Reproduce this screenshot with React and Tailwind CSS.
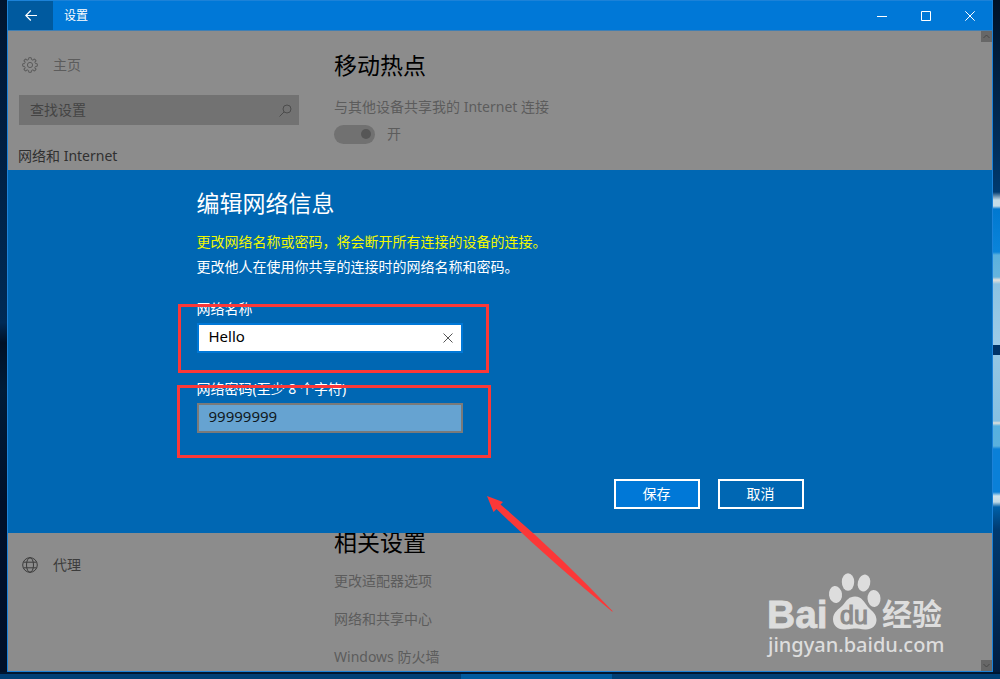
import React from "react";

function GearIcon() {
  const teeth = Array.from({ length: 8 }, (_, i) => i * 45);
  return (
    <svg width="16" height="16" viewBox="0 0 16 16" fill="none" stroke="#5c5c5c" strokeWidth="1" aria-hidden="true">
      <circle cx="8" cy="8" r="2.6" />
      {teeth.map((a) => (
        <path key={a} transform={`rotate(${a} 8 8)`} d="M5.9 2.8 L6.6 2.5 L6.7 0.8 Q8 0.4 9.3 0.8 L9.4 2.5 L10.1 2.8" />
      ))}
    </svg>
  );
}

function GlobeIcon() {
  return (
    <svg width="16" height="16" viewBox="0 0 16 16" fill="none" stroke="#3c3c3c" strokeWidth="1" aria-hidden="true">
      <circle cx="8" cy="8" r="7.3" />
      <ellipse cx="8" cy="8" rx="3.5" ry="7.3" />
      <path d="M1.5 5.2h13M1.5 10.8h13" />
    </svg>
  );
}

function TitleBar() {
  return (
    <header className="flex h-[30px] items-stretch border-b border-[#3f7fb4] bg-[#0078d7] text-white">
      <button type="button" aria-label="返回" className="flex w-[45px] items-center justify-center bg-[#005a9f]">
        <svg width="12" height="11" viewBox="0 0 12 11" fill="none" stroke="currentColor" strokeWidth="1.2">
          <path d="M12 5.5H0.8M5.8 0.5L0.8 5.5L5.8 10.5" />
        </svg>
      </button>
      <h1 className="flex-1 self-center pl-[11px] text-xs">设置</h1>
      <button type="button" aria-label="最小化" className="flex w-11 items-center justify-center">
        <svg width="10" height="10" viewBox="0 0 10 10" fill="none" stroke="currentColor">
          <path d="M0 5.5H10" />
        </svg>
      </button>
      <button type="button" aria-label="最大化" className="flex w-11 items-center justify-center">
        <svg width="10" height="10" viewBox="0 0 10 10" fill="none" stroke="currentColor">
          <path d="M0.5 0.5H9.5V9.5H0.5Z" />
        </svg>
      </button>
      <button type="button" aria-label="关闭" className="flex w-11 items-center justify-center">
        <svg width="10" height="10" viewBox="0 0 10 10" fill="none" stroke="currentColor">
          <path d="M0.3 0.3L9.7 9.7M9.7 0.3L0.3 9.7" />
        </svg>
      </button>
    </header>
  );
}

function ScrollButton({ label, d, end }) {
  return (
    <button
      type="button"
      aria-label={label}
      className={`flex h-[11px] w-[11px] shrink-0 items-center justify-center bg-[#676767] ${end ? "self-end" : "self-start"}`}
    >
      <svg width="7" height="5" viewBox="0 0 7 5" fill="none" stroke="#484848">
        <path d={d} />
      </svg>
    </button>
  );
}

function SettingsTop() {
  return (
    <div className="flex bg-[#8c8c8c]">
      <aside className="w-[326px] shrink-0 pr-[35px] pb-1 pt-[19px]">
        <a href="#home" className="flex h-[30px] items-center gap-[15px] pl-[14px] text-[#5c5c5c]">
          <GearIcon />
          主页
        </a>
        <div className="mt-[15px] ml-[11px] flex h-[30px] items-center bg-[#727272] pr-[7px] pl-[11px]">
          <input
            type="search"
            aria-label="查找设置"
            placeholder="查找设置"
            className="min-w-0 flex-1 bg-transparent outline-none placeholder:text-[#444444]"
          />
          <svg width="13" height="13" viewBox="0 0 13 13" fill="none" stroke="#4c4c4c" aria-hidden="true">
            <circle cx="8" cy="5" r="4" />
            <path d="M5.2 7.8L0.5 12.5" />
          </svg>
        </div>
        <h2 className="mt-[21px] pl-[10px] leading-5 text-[#303030]">网络和 Internet</h2>
      </aside>
      <main className="flex-1 pt-5 text-[#5c5c5c]">
        <h2 className="text-[23px] leading-7 text-black">移动热点</h2>
        <p className="mt-[18px] leading-5">与其他设备共享我的 Internet 连接</p>
        <label className="mt-[7px] flex h-5 items-center gap-3">
          <input
            type="checkbox"
            role="switch"
            defaultChecked
            className="flex h-[19px] w-[41px] appearance-none items-center justify-end rounded-full bg-[#717171] pr-1 before:size-[10px] before:rounded-full before:bg-[#565656]"
          />
          开
        </label>
      </main>
      <ScrollButton label="向上滚动" d="M0.5 4L3.5 1L6.5 4" />
    </div>
  );
}

function EditDialog() {
  return (
    <section role="dialog" aria-labelledby="dialog-title" className="relative bg-[#0067b3] pt-[18px] pb-6 text-white">
      <form className="mx-auto max-w-[607px]" onSubmit={(e) => e.preventDefault()}>
        <h2 id="dialog-title" className="text-[23px] leading-[30px]">编辑网络信息</h2>
        <p className="mt-[11px] leading-[25px] text-[#f0f800]">更改网络名称或密码，将会断开所有连接的设备的连接。</p>
        <p className="leading-[25px]">更改他人在使用你共享的连接时的网络名称和密码。</p>

        <div className="relative mt-5 w-[266px]">
          <label htmlFor="ssid" className="block leading-5">网络名称</label>
          <div className="mt-1 flex h-[30px] items-center border-2 border-[#0078d7] bg-white pr-2 pl-[10px] text-black">
            <input id="ssid" type="text" defaultValue="Hello" className="min-w-0 flex-1 bg-transparent pb-1 text-[15px] leading-5 outline-none" />
            <button type="button" aria-label="清除">
              <svg width="10" height="10" viewBox="0 0 10 10" fill="none" stroke="#555555">
                <path d="M0.5 0.5L9.5 9.5M9.5 0.5L0.5 9.5" />
              </svg>
            </button>
          </div>
          <div className="pointer-events-none absolute top-[5px] -right-[26px] -bottom-[20px] -left-[19px] border-3 border-[#fb3838]" />
        </div>

        <div className="relative mt-[26px] w-[266px]">
          <label htmlFor="password" className="block leading-5">网络密码(至少 8 个字符)</label>
          <div className="mt-1 flex h-[30px] items-center border-2 border-[#7a7a7a] bg-[#66a3d1] pr-2 pl-[10px]">
            <input id="password" type="text" defaultValue="99999999" className="min-w-0 flex-1 bg-transparent pb-1 text-[15px] leading-5 text-[#101820] outline-none" />
          </div>
          <div className="pointer-events-none absolute top-[6px] -right-[28px] -bottom-[25px] -left-[20px] border-3 border-[#fb3838]" />
        </div>

        <div className="mt-[46px] flex justify-end gap-[18px]">
          <button type="submit" className="h-[30px] w-[86px] border-2 border-white bg-[#0078d7]">保存</button>
          <button type="button" className="h-[30px] w-[86px] border-2 border-white">取消</button>
        </div>
      </form>
      <svg className="pointer-events-none absolute top-[326px] left-[479px] z-10" width="128" height="118" viewBox="0 0 128 118" aria-hidden="true">
        <path d="M0 0L16 6L13.500 8.500Q72 58 126 115.500L125 115.500Q62 64 9.500 13L6.500 16Z" fill="#fb3838" />
      </svg>
    </section>
  );
}

function Watermark() {
  return (
    <svg
      className="pointer-events-none absolute right-[44px] bottom-[10px]"
      width="184"
      height="90"
      viewBox="764 570 184 90"
      fill="#dddddd"
      role="img"
      aria-label="Baidu 经验"
    >
      <ellipse cx="835.5" cy="593.5" rx="6.5" ry="8.5" transform="rotate(-8 835.5 593.5)" />
      <ellipse cx="848" cy="581" rx="6.2" ry="8.7" />
      <ellipse cx="864" cy="582" rx="6.2" ry="8.5" transform="rotate(14 864 582)" />
      <ellipse cx="874" cy="597.5" rx="6.5" ry="8.5" transform="rotate(-5 874 597.5)" />
      <path d="M855 595.5C862 595.5 864 601 868 606C872 610 876.500 613 876.500 619C876.500 625 871 629 865 628.500C861 628 858 627.500 855 627.500C851 627.500 849 628.500 844 628.500C837 628.500 833 624 833 618C833 611 839 608 843 604C847 599 849 595.5 855 595.5Z" />
      <text x="767" y="627" fontSize="39" fontWeight="700" stroke="#dddddd" strokeWidth="0.8" fontFamily="'Liberation Sans', sans-serif">Bai</text>
      <text x="840" y="623" fontSize="25" fill="#8c8c8c" stroke="#8c8c8c" strokeWidth="1.2" fontFamily="'Liberation Sans', sans-serif">du</text>
      <text x="882" y="624" fontSize="30" fontWeight="700" fontFamily="'Noto Sans CJK SC', sans-serif">经验</text>
      <text x="768" y="651" fontSize="20" fontWeight="500" fontFamily="'Noto Sans', sans-serif">jingyan.baidu.com</text>
    </svg>
  );
}

function SettingsBottom() {
  return (
    <div className="relative flex flex-1 overflow-hidden bg-[#8c8c8c]">
      <aside className="w-[326px] shrink-0 pt-[17px]">
        <a href="#proxy" className="flex h-[30px] items-center gap-[15px] pl-[14px] text-[#3c3c3c]">
          <GlobeIcon />
          代理
        </a>
      </aside>
      <section className="flex flex-1 flex-col items-start gap-[18px] pb-1 leading-5 text-[#5c5c5c]">
        <h2 className="pb-0.5 text-[23px] leading-[18px] text-black">相关设置</h2>
        <a href="#adapter">更改适配器选项</a>
        <a href="#sharing">网络和共享中心</a>
        <a href="#firewall">Windows 防火墙</a>
      </section>
      <ScrollButton label="向下滚动" d="M0.5 1L3.5 4L6.5 1" end />
      <Watermark />
    </div>
  );
}

export default function App() {
  return (
    <div className="flex min-h-screen flex-col bg-[#001630] font-['Noto_Sans','Noto_Sans_CJK_SC',sans-serif] text-sm">
      <div className="flex flex-1">
        <div className="w-[7px] shrink-0 bg-[linear-gradient(180deg,#001530_0%,#002348_30%,#002a55_48%,#001026_51%,#001c38_58%,#00102a_75%,#001028_100%)]" />
        <div className="flex min-w-0 flex-1 flex-col border border-[#1c82d8]">
          <TitleBar />
          <SettingsTop />
          <EditDialog />
          <SettingsBottom />
        </div>
        <div className="w-[7px] shrink-0 bg-[linear-gradient(180deg,#001228_0px,#002f5c_150px,#003a70_192px,#c4dce8_200px,#c4dce8_206px,#0078d0_209px,#0a84da_252px,#5ab0dd_255px,#66b4de_277px,#e6e0da_280px,#8cc2e2_284px,#9ccbe8_345px,#003468_345px,#003468_355px,#93c6e3_355px,#86c0e2_421px,#e0e0da_423px,#55b0e0_426px,#5ab0dd_446px,#0a80d8_449px,#0a80d8_492px,#d0e4ec_496px,#c0dae6_502px,#0060a8_507px,#003a70_530px,#001c40_672px)]" />
      </div>
      <footer className="flex h-[7px] border-t-2 border-[#001630] bg-[#003f75]">
        <div className="w-[46.1%]" />
        <div className="w-[15.1%] bg-[#005a9e]" />
      </footer>
    </div>
  );
}
